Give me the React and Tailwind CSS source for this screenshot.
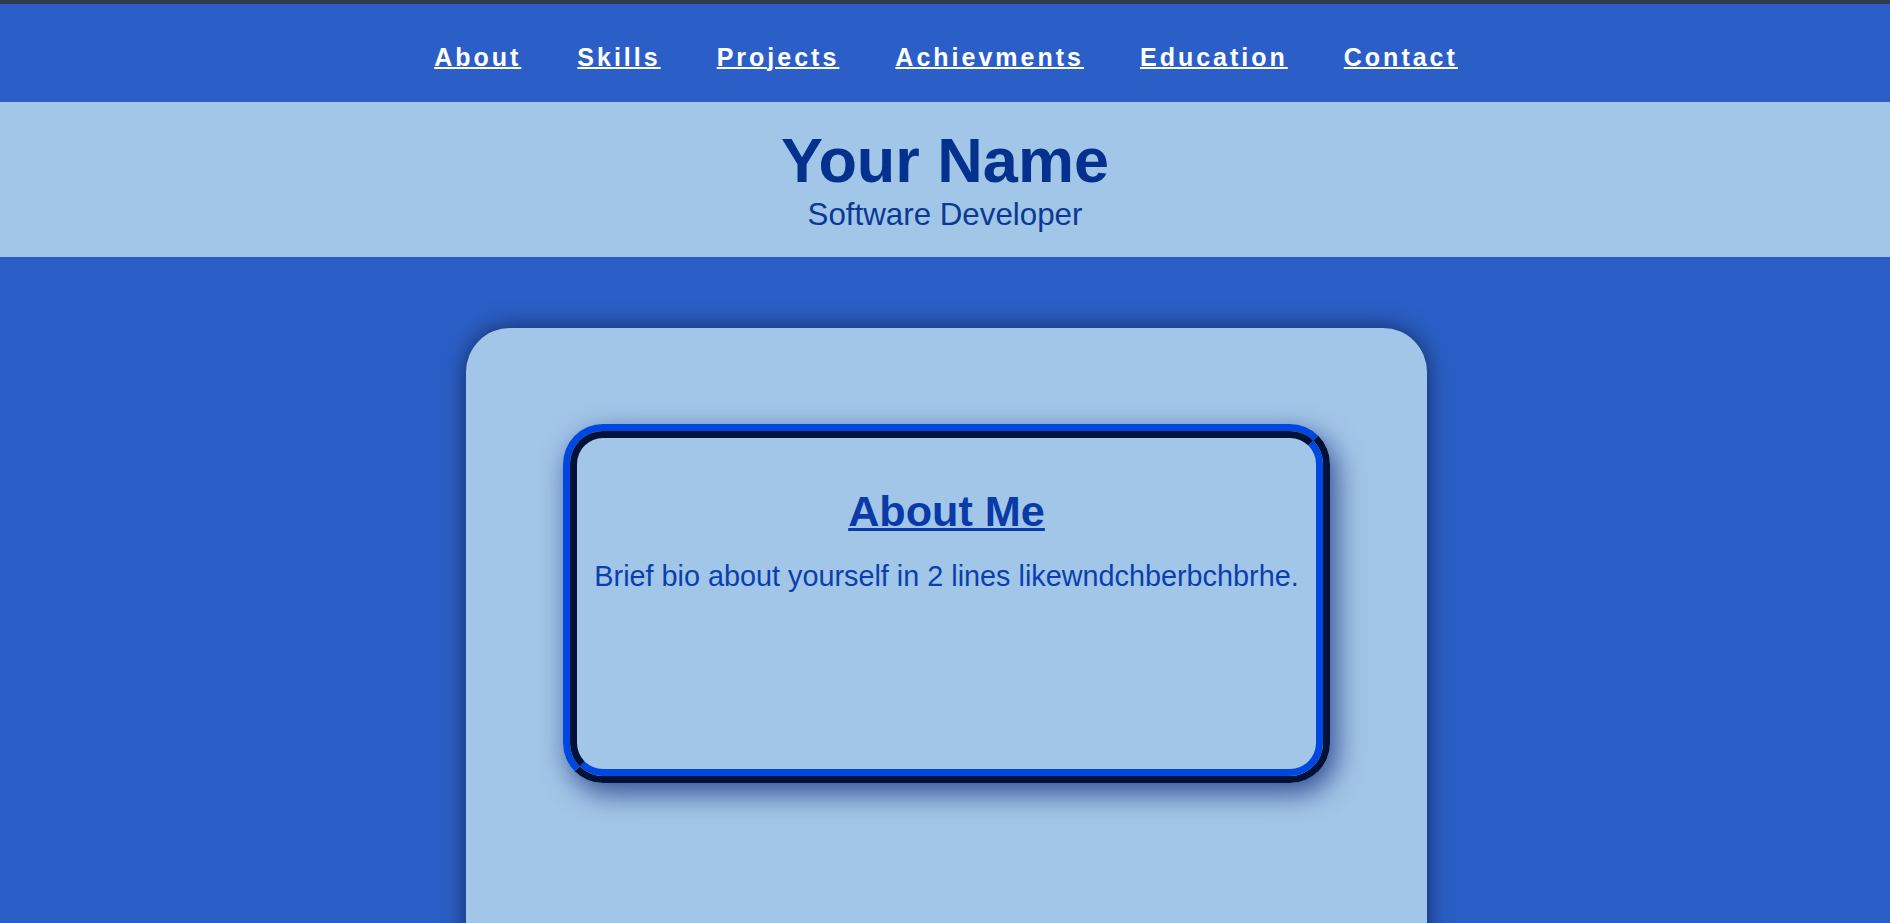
export default function App() {
  const links = ["About", "Skills", "Projects", "Achievments", "Education", "Contact"];
  return (
    <div className="min-h-screen bg-[#2b5fc7] font-['Liberation_Sans',Arial,sans-serif]">
      <div className="h-[4px] bg-[#2c3e46]" />
      <nav className="bg-[#2b5fc7] pt-[39px] pb-[30px]">
        <ul className="flex justify-center gap-[56px] pl-[2px]">
          {links.map((l) => (
            <li key={l}>
              <a
                href="#"
                className="block text-[25px] leading-[1.15] font-bold tracking-[3px] text-white underline decoration-2"
              >
                {l}
              </a>
            </li>
          ))}
        </ul>
      </nav>
      <header className="bg-[#a2c6e8] h-[155px] flex flex-col items-center pt-[22px]">
        <h1 className="text-[63px] leading-[1.15] font-bold text-[#04318e]">Your Name</h1>
        <p className="text-[31.3px] leading-[1.15] text-[#0b3a94] mt-[1px]">Software Developer</p>
      </header>
      <main className="pt-[71px]">
        <div className="ml-[calc(50%-479px)] w-[961px] rounded-[44px] bg-[#a2c6e8] px-[97px] pt-[96px] pb-[220px] shadow-[0_0_25px_rgba(0,0,0,0.55)]">
          <section className="rounded-[40px] border-[7px] border-t-[#0047e0] border-l-[#0047e0] border-b-[#001238] border-r-[#001238] shadow-[6px_10px_28px_rgba(0,25,110,0.7)]">
            <div className="h-[345px] rounded-[33px] border-[7px] border-t-[#001238] border-l-[#001238] border-b-[#0047e0] border-r-[#0047e0] bg-[#a2c6e8] pt-[49px] text-center">
              <h2 className="text-[43.2px] leading-[1.15] font-bold text-[#0a3aa8] underline decoration-[3px]">About Me</h2>
              <p className="mt-[24px] text-[28.8px] leading-[1.15] text-[#0b3fae]">
                Brief bio about yourself in 2 lines likewndchberbchbrhe.
              </p>
            </div>
          </section>
        </div>
      </main>
    </div>
  );
}
